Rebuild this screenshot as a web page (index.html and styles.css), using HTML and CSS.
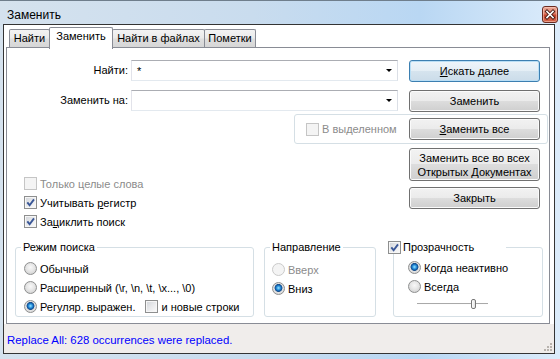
FILE: index.html
```html
<!DOCTYPE html>
<html lang="ru">
<head>
<meta charset="utf-8">
<title>Заменить</title>
<link rel="stylesheet" href="styles.css">
</head>
<body>
<div class="window">
  <div class="titlebar">
    <span class="title">Заменить</span>
    <span class="close">
      <svg width="14" height="15" viewBox="0 0 14 15">
        <path class="x-shadow" d="M4 4.5 L10 10.5 M10 4.5 L4 10.5"/>
        <path class="x-white" d="M4 4.5 L10 10.5 M10 4.5 L4 10.5"/>
      </svg>
    </span>
  </div>
  <div class="client">
    <div class="tabarea">
      <div class="tabs">
        <div class="tab w1">Найти</div>
        <div class="tab active w2">Заменить</div>
        <div class="tab w3">Найти в файлах</div>
        <div class="tab w4">Пометки</div>
      </div>
      <div class="panel">
        <div class="row first">
          <label class="lbl">Найти:</label>
          <div class="combo"><span class="val">*</span><span class="arrow"></span></div>
          <button class="btn default"><u>И</u>скать далее</button>
        </div>
        <div class="row second">
          <label class="lbl">Заменить на:</label>
          <div class="combo"><span class="val"></span><span class="arrow"></span></div>
          <button class="btn">Заменить</button>
        </div>
        <div class="selbox">
          <span class="cb disabled"></span><span class="dis sel-label">В выделенном</span>
          <button class="btn push"><u>З</u>аменить все</button>
        </div>
        <div class="mid">
          <div class="checks">
            <div class="opt"><span class="cb disabled"></span><span class="dis">Только целые слова</span></div>
            <div class="opt"><span class="cb"><svg class="tick" viewBox="0 0 11 11"><path d="M2.3 5.4 L4.6 8.2 L9 2.4"/></svg></span><span>Учитывать <u>р</u>егистр</span></div>
            <div class="opt"><span class="cb"><svg class="tick" viewBox="0 0 11 11"><path d="M2.3 5.4 L4.6 8.2 L9 2.4"/></svg></span><span>За<u>ц</u>иклить поиск</span></div>
          </div>
          <div class="actions">
            <button class="btn tall">Заменить все во всех<br>Открытых <u>Д</u>окументах</button>
            <button class="btn">Закрыть</button>
          </div>
        </div>
        <div class="groups">
          <fieldset class="grp g-mode">
            <legend>Режим поиска</legend>
            <div class="opts">
              <div class="opt r"><span class="rb"></span><span>Обычный</span></div>
              <div class="opt r"><span class="rb"></span><span>Расширенный (\r, \n, \t, \x..., \0)</span></div>
              <div class="opt r"><span class="rb on"></span><span>Регуляр. выражен.</span><span class="cb nl"></span><span>и новые строки</span></div>
            </div>
          </fieldset>
          <fieldset class="grp g-dir">
            <legend>Направление</legend>
            <div class="opts">
              <div class="opt r"><span class="rb disabled"></span><span class="dis">Вверх</span></div>
              <div class="opt r"><span class="rb on"></span><span>Вниз</span></div>
            </div>
          </fieldset>
          <fieldset class="grp g-trans">
            <legend><span class="cb"><svg class="tick" viewBox="0 0 11 11"><path d="M2.3 5.4 L4.6 8.2 L9 2.4"/></svg></span><span>Прозрачность</span></legend>
            <div class="opts">
              <div class="opt r"><span class="rb on"></span><span>Когда неактивно</span></div>
              <div class="opt r"><span class="rb"></span><span>Всегда</span></div>
              <div class="slider"><div class="track"></div><div class="thumb"></div></div>
            </div>
          </fieldset>
        </div>
      </div>
    </div>
    <div class="status">
      <span class="msg">Replace All: 628 occurrences were replaced.</span>
      <svg class="grip" width="10" height="10" viewBox="0 0 10 10">
        <rect x="7" y="1" width="2" height="2" fill="#b8b3ae"/>
        <rect x="4" y="4" width="2" height="2" fill="#b8b3ae"/>
        <rect x="7" y="4" width="2" height="2" fill="#b8b3ae"/>
        <rect x="1" y="7" width="2" height="2" fill="#b8b3ae"/>
        <rect x="4" y="7" width="2" height="2" fill="#b8b3ae"/>
        <rect x="7" y="7" width="2" height="2" fill="#b8b3ae"/>
      </svg>
    </div>
  </div>
</div>
</body>
</html>
```
FILE: styles.css
```css
* { box-sizing: border-box; }
html, body { margin: 0; padding: 0; }
body {
  width: 560px;
  height: 359px;
  overflow: hidden;
  font-family: "Liberation Sans", Arial, sans-serif;
  font-size: 11px;
  color: #000;
  background: #c6dcf2;
}
.window {
  width: 560px;
  height: 359px;
  display: flex;
  flex-direction: column;
  border-top: 1px solid #6f7e8c;
  background: linear-gradient(to right, #d5e2ee 0%, #c9dcee 45%, #b9d7f3 75%, #dcecfb 100%);
}
.titlebar {
  height: 23px;
  flex: none;
  display: flex;
  justify-content: space-between;
  align-items: flex-start;
  padding: 0 2px 0 7px;
}
.title { font-size: 12px; line-height: 14px; margin-top: 7px; }
.close {
  width: 16px;
  height: 17px;
  margin-top: 5px;
  border: 1px solid #6b2c22;
  border-radius: 3px;
  background: linear-gradient(#eba999 0%, #dd7b65 45%, #c8452e 55%, #d5674c 100%);
  box-shadow: inset 0 0 0 1px rgba(255, 215, 200, 0.5);
  display: flex;
  align-items: center;
  justify-content: center;
}
.close svg { display: block; }
.x-shadow { stroke: #4a1c14; stroke-width: 3.4; stroke-linecap: square; fill: none; }
.x-white { stroke: #fff; stroke-width: 1.6; stroke-linecap: square; fill: none; }

.client {
  flex: none;
  height: 330px;
  margin: 0 5px 0 3px;
  border: 1px solid #343434;
  background: #fff;
  display: flex;
  flex-direction: column;
}
.tabarea { height: 299px; flex: none; display: flex; flex-direction: column; }
.tabs { height: 22px; flex: none; display: flex; align-items: flex-end; padding-left: 5px; }
.tab {
  height: 18px;
  border: 1px solid #898c95;
  border-bottom: none;
  border-radius: 2px 2px 0 0;
  margin-left: -1px;
  text-align: center;
  line-height: 17px;
  white-space: nowrap;
  background: linear-gradient(#f3f3f3 0%, #ebebeb 45%, #dedede 55%, #d6d6d6 100%);
}
.tab:first-child { margin-left: 0; }
.tab.active {
  height: 22px;
  margin-bottom: -2px;
  background: #fff;
  position: relative;
  z-index: 1;
}
.w1 { width: 41px; }
.w2 { width: 64px; }
.w3 { width: 93px; }
.w4 { width: 52px; }

.panel {
  height: 277px;
  flex: none;
  margin: 0 4px 0 2px;
  border: 1px solid #898c95;
  background: #fff;
}
.row { display: flex; align-items: flex-start; }
.row.first { margin-top: 12px; }
.row.second { margin-top: 8px; }
.lbl { width: 121px; text-align: right; line-height: 21px; }
.combo {
  width: 267px;
  height: 21px;
  margin-left: 3px;
  border: 1px solid;
  border-color: #abadb3 #dbdfe6 #e3e9ef #e2e3ea;
  display: flex;
  align-items: center;
  padding: 0 5px;
}
.val { line-height: 14px; }
.arrow {
  margin-left: auto;
  width: 0;
  height: 0;
  border-left: 3px solid transparent;
  border-right: 3px solid transparent;
  border-top: 3px solid #000;
}
.btn {
  font: inherit;
  color: #000;
  padding: 0;
  margin: 0;
  width: 131px;
  height: 22px;
  border: 1px solid #707070;
  border-radius: 3px;
  background: linear-gradient(#f2f2f2 0%, #ebebeb 49%, #dddddd 50%, #cfcfcf 100%);
  box-shadow: inset 0 0 0 1px #fbfbfb;
  text-align: center;
  line-height: 14px;
  flex: none;
}
.row .btn { margin-left: 11px; }
.btn.default {
  border-color: #3c7fb1;
  background: linear-gradient(#eef5fa 0%, #e4eef5 49%, #d6e4ee 50%, #cbdce9 100%);
  box-shadow: inset 0 0 0 1px #b9def5;
}
.btn.tall { height: 33px; }
.selbox {
  margin: 2px 0 0 287px;
  width: 254px;
  height: 30px;
  border: 1px solid #d5dfe5;
  border-radius: 3px;
  display: flex;
  align-items: center;
  padding: 0 7px 0 11px;
}
.sel-label { margin-left: 3px; }
.btn.push { margin-left: auto; }
.dis { color: #8b8b8b; }

.mid { display: flex; justify-content: space-between; }
.checks { margin-left: 17px; padding-top: 33px; display: flex; flex-direction: column; gap: 6px; }
.opt { display: flex; align-items: center; height: 13px; gap: 3px; white-space: nowrap; }
.actions { margin-right: 9px; padding-top: 4px; display: flex; flex-direction: column; gap: 6px; }

.cb {
  width: 13px;
  height: 13px;
  flex: none;
  border: 1px solid #8e8f8f;
  background: linear-gradient(135deg, #d0d3d8 0%, #e9eaec 50%, #fbfbfb 100%);
  box-shadow: inset 0 0 0 1px #f6f6f6;
  display: flex;
  align-items: center;
  justify-content: center;
}
.cb.disabled { border-color: #c5c5c5; background: #f4f4f4; box-shadow: none; }
.tick { width: 11px; height: 11px; display: block; }
.tick path { fill: none; stroke: #3a5797; stroke-width: 1.9; }

.rb {
  width: 13px;
  height: 13px;
  flex: none;
  border-radius: 50%;
  border: 1px solid #8e8f8f;
  background: radial-gradient(circle at 50% 40%, #f8f8f8 0, #e6e6e6 45%, #c9c9c9 100%);
}
.rb.on {
  background: radial-gradient(circle at 50% 45%, #9ae4ff 0, #3aa2e6 1.6px, #1266b5 2.8px, #1b4f8a 3.6px, #e3e3e3 4.3px, #cfcfcf 100%);
}
.rb.disabled { border-color: #cacaca; background: #f4f4f4; }

.groups { display: flex; align-items: flex-start; margin-top: 12px; padding-left: 8px; }
.grp {
  margin: 0;
  min-width: 0;
  height: 77px;
  border: 1px solid #d5dfe5;
  border-radius: 3px;
  padding: 0;
}
.grp legend { padding: 0 2px; margin-left: 5px; line-height: 14px; }
.g-mode { width: 239px; }
.g-dir { width: 112px; margin-left: 10px; }
.g-trans { width: 150px; margin-left: 17px; }
.g-trans legend {
  margin-left: -6px;
  padding: 0;
  width: 118px;
  display: flex;
  align-items: center;
  gap: 2px;
  height: 14px;
}
.opts { display: flex; flex-direction: column; }
.opt.r { height: 19px; }
.g-mode .opts { padding: 5px 0 0 8px; }
.g-dir .opts { padding: 6px 0 0 7px; }
.g-trans .opts { padding: 4px 0 0 14px; }
.cb.nl { margin-left: 7px; }
.slider { position: relative; width: 71px; height: 10px; margin: 3px 0 0 9px; }
.track { margin-top: 4px; height: 2px; border-top: 1px solid #a9a9a9; border-bottom: 1px solid #fdfdfd; }
.thumb {
  position: absolute;
  left: 54px;
  top: 0;
  width: 5px;
  height: 10px;
  border: 1px solid #777;
  border-radius: 2px;
  background: linear-gradient(to right, #fff, #e2e2e2);
}

.status {
  flex: 1;
  background: #f0edeb;
  display: flex;
  align-items: flex-start;
  padding: 9px 1px 1px 3px;
}
.msg { color: #0000ff; font-size: 11.4px; line-height: 14px; white-space: nowrap; }
.grip { margin-left: auto; align-self: flex-end; display: block; }
```
